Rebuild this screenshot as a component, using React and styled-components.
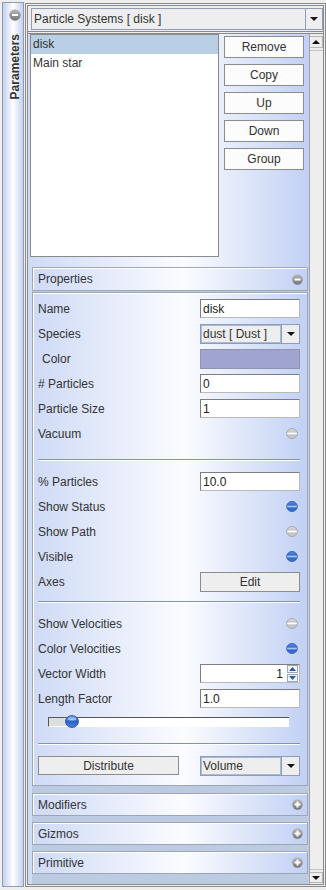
import React from "react";
import styled, { createGlobalStyle } from "styled-components";

const GlobalStyle = createGlobalStyle`
  html, body { margin: 0; padding: 0; background: #eeeeee; }
  body { font-family: "Liberation Sans", Arial, sans-serif; font-size: 12px; color: #333333; }
  * { box-sizing: border-box; }
`;

const blueGrad = `linear-gradient(90deg, #cfdaf6 0%, #fbfcff 55%, #c1d0f4 100%)`;

const Screen = styled.div`
  width: 326px;
  height: 890px;
  overflow: hidden;
  display: flex;
  align-items: flex-start;
  padding: 2px 0 3px 2px;
  background: #eeeeee;
`;

const SideTab = styled.div`
  width: 22px;
  height: 885px;
  border: 1px solid #8f9bb0;
  background: linear-gradient(90deg, #c3d0ef 0%, #ffffff 50%, #c3d0ef 100%);
  display: flex;
  flex-direction: column;
  align-items: center;
  padding: 6px 0 0 3px;
  gap: 13px;
`;

const SideLabel = styled.div`
  writing-mode: vertical-rl;
  transform: rotate(180deg);
  font-weight: bold;
  font-size: 12px;
  color: #333;
  line-height: 14px;
`;

const Frame = styled.div`
  margin: 1px 0 0 1px;
  width: 301px;
  height: 884px;
  border: 3px double #8a8a8a;
  display: flex;
  flex-direction: column;
`;

const ComboRow = styled.div`
  padding: 2px 0 1px 3px;
  display: flex;
`;

const Combo = styled.div`
  display: flex;
  height: ${(p) => p.$h}px;
  width: ${(p) => p.$w};
  border: 1px solid #8e9db5;
  background: #eeeeee;
`;

const ComboText = styled.div`
  flex: 1;
  padding-left: ${(p) => (p.$inner ? 1 : 2)}px;
  display: flex;
  align-items: center;
  white-space: nowrap;
  overflow: hidden;
  color: #333;
  border: ${(p) => (p.$inner ? "1px solid #a9bbd6" : "none")};
`;

const ComboArrow = styled.div`
  width: ${(p) => p.$w}px;
  border-left: 1px solid #8e9db5;
  display: flex;
  align-items: center;
  justify-content: center;
  background: #eeeeee;
`;

const ScrollPane = styled.div`
  flex: 1;
  display: flex;
  border-top: 3px double #8a8a8a;
  min-height: 0;
`;

const Viewport = styled.div`
  flex: 1;
  background: ${blueGrad};
  overflow: hidden;
  display: flex;
  flex-direction: column;
`;

const ScrollBar = styled.div`
  width: 14px;
  background: #eeeeee;
  border-left: 1px solid #a3a3a3;
  display: flex;
  flex-direction: column;
  padding: 2px 0 1px 0;
`;

const ScrollBtn = styled.div`
  height: ${(p) => p.$h}px;
  border: 1px solid #b5b5b5;
  border-left: none;
  background: #eeeeee;
  display: flex;
  align-items: center;
  justify-content: center;
`;

const ScrollThumb = styled.div`
  flex: 1;
  margin: 2px 0;
  border-top: 1px solid #c4c4c4;
  border-bottom: 1px solid #c4c4c4;
  background: #eeeeee;
`;

const TopSection = styled.div`
  display: flex;
  padding-left: 2px;
`;

const List = styled.div`
  width: 189px;
  height: 223px;
  border: 1px solid #8a8a8a;
  background: #ffffff;
  display: flex;
  flex-direction: column;
`;

const ListItem = styled.div`
  height: 19px;
  line-height: 19px;
  padding-left: 2px;
  background: ${(p) => (p.$selected ? "#b8cfe5" : "transparent")};
  color: #333;
`;

const ButtonCol = styled.div`
  margin-left: 5px;
  padding-top: 2px;
  display: flex;
  flex-direction: column;
  gap: 6px;
  width: 80px;
`;

const Button = styled.div`
  height: ${(p) => p.$h || 22}px;
  width: ${(p) => p.$w || "100%"};
  border: 1px solid #8c8c8c;
  background: ${(p) => (p.$gray ? "#eeeeee" : "#fcfcfc")};
  display: flex;
  align-items: center;
  justify-content: center;
  color: #333;
`;

const Accordion = styled.div`
  margin: 10px 0 0 4px;
  width: 276px;
  display: flex;
  flex-direction: column;
  background: #bccbe2;
  flex: 1;
`;

const Header = styled.div`
  height: ${(p) => p.$h}px;
  border: 1px solid #9da6b3;
  box-shadow: inset 1px 1px 0 #ffffff;
  background: ${blueGrad};
  display: flex;
  align-items: center;
  justify-content: space-between;
  padding: 0 4px 0 5px;
  color: #333;
  flex-shrink: 0;
`;

const Content = styled.div`
  margin-top: 1px;
  border: 1px solid #9da6b3;
  box-shadow: inset 1px 1px 0 #ffffff;
  background: ${blueGrad};
  padding: 3px 7px 7px 5px;
  display: flex;
  flex-direction: column;
  flex-shrink: 0;
`;

const Collapsed = styled.div`
  padding-top: 7px;
  display: flex;
  flex-direction: column;
  gap: 6px;
`;

const Row = styled.div`
  height: ${(p) => p.$h || 25}px;
  display: flex;
  align-items: center;
  justify-content: space-between;
`;

const Label = styled.span`
  color: #333;
  padding-left: ${(p) => (p.$indent ? 4 : 0)}px;
  white-space: pre;
`;

const Control = styled.div`
  width: 100px;
  display: flex;
  justify-content: flex-end;
  align-items: center;
`;

const TextField = styled.div`
  width: 100px;
  height: 19px;
  border: 1px solid #b9b9b9;
  border-top-color: #7d7d7d;
  border-left-color: #7d7d7d;
  background: #ffffff;
  padding: 0 2px 0 2px;
  display: flex;
  align-items: center;
  justify-content: ${(p) => (p.$right ? "flex-end" : "flex-start")};
  color: #222;
`;

const Swatch = styled.div`
  width: 100px;
  height: 20px;
  border: 1px solid #8f93ad;
  background: #a0a4d0;
`;

const ToggleWrap = styled.div`
  margin-right: 2px;
  display: flex;
`;

const Separator = styled.div`
  height: 1px;
  background: #7f93b3;
  box-shadow: 0 1px 0 #ffffff;
  margin: ${(p) => p.$top}px 0 ${(p) => p.$bottom}px 0;
`;

const Spinner = styled.div`
  width: 100px;
  height: 19px;
  border: 1px solid #b9b9b9;
  border-top-color: #7d7d7d;
  border-left-color: #7d7d7d;
  background: #ffffff;
  display: flex;
  align-items: center;
`;

const SpinValue = styled.div`
  flex: 1;
  text-align: right;
  padding-right: 4px;
  color: #222;
`;

const SpinBtns = styled.div`
  width: 11px;
  margin-right: 1px;
  display: flex;
  flex-direction: column;
  gap: 1px;
`;

const SpinBtn = styled.div`
  height: 8px;
  border: 1px solid #9aa7ba;
  background: #f4f6fa;
  display: flex;
  align-items: center;
  justify-content: center;
`;

const SliderRow = styled.div`
  height: 22px;
  display: flex;
  align-items: center;
  padding-left: 10px;
`;

const SliderTrack = styled.div`
  position: relative;
  width: 241px;
  height: 10px;
  border-top: 1px solid #555555;
  border-left: 1px solid #555555;
  border-bottom: 1px solid #ffffff;
  background: #ffffff;
`;

const SliderFill = styled.div`
  height: 100%;
  background: #dedede;
`;

const SliderKnob = styled.div`
  position: absolute;
  top: -3px;
  left: ${(p) => p.$x}px;
  display: flex;
`;

const BottomRow = styled.div`
  height: 25px;
  display: flex;
  align-items: center;
  justify-content: space-between;
`;

const Tri = ({ dir = "down", color = "#111", w = 8, h = 4 }) => (
  <svg width={w} height={h} viewBox={`0 0 ${w} ${h}`}>
    {dir === "down" ? (
      <polygon points={`0,0 ${w},0 ${w / 2},${h}`} fill={color} />
    ) : (
      <polygon points={`0,${h} ${w},${h} ${w / 2},0`} fill={color} />
    )}
  </svg>
);

const CircleIcon = ({ kind = "minus", size = 11 }) => {
  const c = size / 2;
  const id = `ci${size}`;
  return (
    <svg width={size} height={size} viewBox={`0 0 ${size} ${size}`}>
      <defs>
        <linearGradient id={id} x1="0" y1="0" x2="0" y2="1">
          <stop offset="0" stopColor="#b8b8b8" />
          <stop offset="1" stopColor="#757575" />
        </linearGradient>
      </defs>
      <circle cx={c} cy={c} r={c - 0.3} fill={`url(#${id})`} />
      <rect x={c - 3} y={c - 1} width="6" height="2" fill="#ffffff" />
      {kind === "plus" && <rect x={c - 1} y={c - 3} width="2" height="6" fill="#ffffff" />}
    </svg>
  );
};

const Gem = ({ on, w = 12, h = 11 }) => {
  const id = on ? "gemOn" : "gemOff";
  return (
    <svg width={w} height={h} viewBox="0 0 12 11">
      <defs>
        <linearGradient id={id} x1="0" y1="0" x2="0" y2="1">
          {on ? (
            <>
              <stop offset="0" stopColor="#5b8fe8" />
              <stop offset="0.45" stopColor="#2f62c8" />
              <stop offset="0.55" stopColor="#2f62c8" />
              <stop offset="1" stopColor="#3a74dc" />
            </>
          ) : (
            <>
              <stop offset="0" stopColor="#e2e2e2" />
              <stop offset="0.5" stopColor="#b8b8b8" />
              <stop offset="1" stopColor="#d0d0d0" />
            </>
          )}
        </linearGradient>
      </defs>
      <ellipse cx="6" cy="5.5" rx="5.3" ry="5" fill={`url(#${id})`} stroke={on ? "#2850a0" : "#9c9c9c"} strokeWidth="0.8" />
      <rect x="1.2" y="4.6" width="9.6" height="1.8" fill={on ? "#a8c6f4" : "#ffffff"} />
    </svg>
  );
};

const Knob = () => (
  <svg width="14" height="13" viewBox="0 0 14 13">
    <defs>
      <linearGradient id="knobG" x1="0" y1="0" x2="0" y2="1">
        <stop offset="0" stopColor="#7aa6ee" />
        <stop offset="0.5" stopColor="#2e62c6" />
        <stop offset="1" stopColor="#4a82e0" />
      </linearGradient>
    </defs>
    <ellipse cx="7" cy="6.5" rx="6.5" ry="6" fill="url(#knobG)" stroke="#24479a" strokeWidth="0.8" />
    <ellipse cx="7" cy="4" rx="4" ry="1.6" fill="#b9d1f7" opacity="0.8" />
  </svg>
);

const Toggle = ({ on }) => (
  <Control>
    <ToggleWrap>
      <Gem on={on} />
    </ToggleWrap>
  </Control>
);

const SmallCombo = ({ text }) => (
  <Combo $h={20} $w="100px">
    <ComboText $inner>{text}</ComboText>
    <ComboArrow $w={18}>
      <Tri />
    </ComboArrow>
  </Combo>
);

export default function App() {
  return (
    <>
      <GlobalStyle />
      <Screen>
        <SideTab>
          <CircleIcon kind="minus" size={12} />
          <SideLabel>Parameters</SideLabel>
        </SideTab>
        <Frame>
          <ComboRow>
            <Combo $h={22} $w="100%">
              <ComboText>Particle Systems [ disk ]</ComboText>
              <ComboArrow $w={17}>
                <Tri />
              </ComboArrow>
            </Combo>
          </ComboRow>
          <ScrollPane>
            <Viewport>
              <TopSection>
                <List>
                  <ListItem $selected>disk</ListItem>
                  <ListItem>Main star</ListItem>
                </List>
                <ButtonCol>
                  <Button>Remove</Button>
                  <Button>Copy</Button>
                  <Button>Up</Button>
                  <Button>Down</Button>
                  <Button>Group</Button>
                </ButtonCol>
              </TopSection>
              <Accordion>
                <Header $h={24}>
                  <span>Properties</span>
                  <CircleIcon kind="minus" />
                </Header>
                <Content>
                  <Row>
                    <Label>Name</Label>
                    <TextField>disk</TextField>
                  </Row>
                  <Row>
                    <Label>Species</Label>
                    <SmallCombo text="dust [ Dust ]" />
                  </Row>
                  <Row>
                    <Label $indent>Color</Label>
                    <Swatch />
                  </Row>
                  <Row>
                    <Label># Particles</Label>
                    <TextField>0</TextField>
                  </Row>
                  <Row>
                    <Label>Particle Size</Label>
                    <TextField>1</TextField>
                  </Row>
                  <Row>
                    <Label>Vacuum</Label>
                    <Toggle on={false} />
                  </Row>
                  <Separator $top={13} $bottom={9} />
                  <Row>
                    <Label>% Particles</Label>
                    <TextField>10.0</TextField>
                  </Row>
                  <Row>
                    <Label>Show Status</Label>
                    <Toggle on />
                  </Row>
                  <Row>
                    <Label>Show Path</Label>
                    <Toggle on={false} />
                  </Row>
                  <Row>
                    <Label>Visible</Label>
                    <Toggle on />
                  </Row>
                  <Row>
                    <Label>Axes</Label>
                    <Button $gray $w="100px" $h={20}>Edit</Button>
                  </Row>
                  <Separator $top={7} $bottom={9} />
                  <Row>
                    <Label>Show Velocities</Label>
                    <Toggle on={false} />
                  </Row>
                  <Row>
                    <Label>Color Velocities</Label>
                    <Toggle on />
                  </Row>
                  <Row>
                    <Label>Vector Width</Label>
                    <Spinner>
                      <SpinValue>1</SpinValue>
                      <SpinBtns>
                        <SpinBtn>
                          <Tri dir="up" color="#2a5aa8" w={7} h={4} />
                        </SpinBtn>
                        <SpinBtn>
                          <Tri dir="down" color="#2a5aa8" w={7} h={4} />
                        </SpinBtn>
                      </SpinBtns>
                    </Spinner>
                  </Row>
                  <Row>
                    <Label>Length Factor</Label>
                    <TextField>1.0</TextField>
                  </Row>
                  <SliderRow>
                    <SliderTrack>
                      <SliderFill style={{ width: "22px" }} />
                      <SliderKnob $x={16}>
                        <Knob />
                      </SliderKnob>
                    </SliderTrack>
                  </SliderRow>
                  <Separator $top={10} $bottom={9} />
                  <BottomRow>
                    <Button $gray $w="141px" $h={19}>Distribute</Button>
                    <SmallCombo text="Volume" />
                  </BottomRow>
                </Content>
                <Collapsed>
                  <Header $h={23}>
                    <span>Modifiers</span>
                    <CircleIcon kind="plus" />
                  </Header>
                  <Header $h={23}>
                    <span>Gizmos</span>
                    <CircleIcon kind="plus" />
                  </Header>
                  <Header $h={23}>
                    <span>Primitive</span>
                    <CircleIcon kind="plus" />
                  </Header>
                </Collapsed>
              </Accordion>
            </Viewport>
            <ScrollBar>
              <ScrollBtn $h={12}>
                <Tri dir="up" w={8} h={4} />
              </ScrollBtn>
              <ScrollThumb />
              <ScrollBtn $h={11}>
                <Tri dir="down" w={8} h={4} />
              </ScrollBtn>
            </ScrollBar>
          </ScrollPane>
        </Frame>
      </Screen>
    </>
  );
}
